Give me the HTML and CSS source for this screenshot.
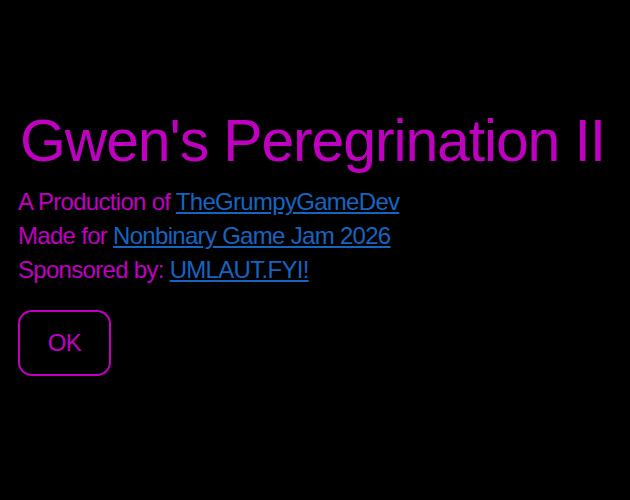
FILE: index.html
```html
<!DOCTYPE html>
<html>
<head>
<meta charset="utf-8">
<link rel="stylesheet" href="styles.css">
</head>
<body>
<main class="screen">
  <h1 class="title">Gwen's Peregrination II</h1>
  <p class="line">A Production of <a href="#">TheGrumpyGameDev</a></p>
  <p class="line">Made for <a href="#">Nonbinary Game Jam 2026</a></p>
  <p class="line">Sponsored by: <a href="#">UMLAUT.FYI!</a></p>
  <button class="ok">OK</button>
</main>
</body>
</html>
```
FILE: styles.css
```css
html, body {
  margin: 0;
  padding: 0;
  background: #000;
  width: 630px;
  height: 500px;
  overflow: hidden;
}
.screen {
  font-family: "Liberation Sans", Arial, sans-serif;
  color: #c000c0;
  padding: 108px 0 0 18px;
  display: flex;
  flex-direction: column;
  align-items: flex-start;
}
.title {
  font-weight: normal;
  font-size: 59px;
  line-height: 66px;
  margin: 0 0 11px 2px;
  letter-spacing: -1.15px;
  white-space: nowrap;
}
.line {
  margin: 0;
  font-size: 24px;
  line-height: 34px;
  letter-spacing: -0.7px;
}
.line a {
  color: #1565c0;
  text-decoration: underline;
}
.ok {
  margin-top: 23px;
  width: 93px;
  height: 66px;
  background: #000;
  border: 2px solid #c000c0;
  border-radius: 14px;
  color: #c000c0;
  font-family: "Liberation Sans", Arial, sans-serif;
  font-size: 24px;
  letter-spacing: -0.7px;
  padding: 0;
}
```
